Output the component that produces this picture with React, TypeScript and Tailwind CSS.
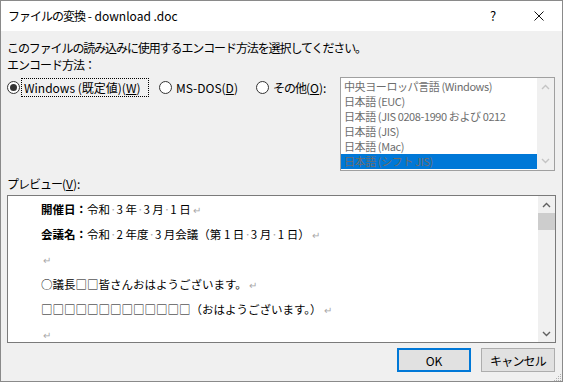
import React from 'react';

function Radio({ checked }: { checked?: boolean }) {
  return (
    <span className="flex h-[13px] w-[13px] shrink-0 items-center justify-center rounded-full border border-[#333] bg-white">
      {checked && <span className="h-[7px] w-[7px] rounded-full bg-[#333]" />}
    </span>
  );
}

function Chevron({ up, color }: { up?: boolean; color: string }) {
  return (
    <svg width="9" height="6" viewBox="0 0 9 6" className="block">
      <path d={up ? 'M1 5 L4.5 1.5 L8 5' : 'M1 1 L4.5 4.5 L8 1'} fill="none" stroke={color} strokeWidth="1.4" />
    </svg>
  );
}

// space marker as shown in the preview
const Sp = () => <span className="text-[#a8a8a8]">·</span>;
const Ret = () => <span className="ml-[2px] text-[10px] text-[#a8a8a8]">↵</span>;

const encodings = [
  '中央ヨーロッパ言語 (Windows)',
  '日本語 (EUC)',
  '日本語 (JIS 0208-1990 および 0212',
  '日本語 (JIS)',
  '日本語 (Mac)',
  '日本語 (シフト JIS)',
];

export default function App() {
  return (
    <div className="flex h-[382px] w-[563px] flex-col overflow-hidden border border-[#8a8a8a] bg-[#f0f0f0] font-['Noto_Sans_CJK_JP','Noto_Sans',sans-serif] text-[12px] text-black">
      {/* Title bar */}
      <div className="flex h-[30px] shrink-0 items-center bg-white">
        <span className="ml-[7px] flex-1 whitespace-pre">
          <span className="tracking-[-1px]">ファイルの変換</span> - download .doc
        </span>
        <span className="w-[46px] text-center text-[13px]">?</span>
        <span className="flex w-[46px] items-center justify-center">
          <svg width="10" height="10" viewBox="0 0 10 10">
            <path d="M0.5 0.5 L9.5 9.5 M9.5 0.5 L0.5 9.5" stroke="#111" strokeWidth="1" />
          </svg>
        </span>
      </div>

      {/* Body */}
      <div className="flex flex-1 flex-col px-[6px] leading-[17px]">
        <div className="mt-[8px] tracking-[-1.1px]">
          このファイルの読み込みに使用するエンコード方法を選択してください。
        </div>
        <div className="tracking-[-1px]">エンコード方法：</div>

        <div className="mt-[4px] flex items-start">
          <div className="mt-[1px] flex h-[19px] items-center">
            <Radio checked />
            <span className="ml-[1px] flex h-[19px] w-[128px] items-center border border-dotted border-black px-[2px]">
              Windows (既定値)(<u>W</u>)
            </span>
            <span className="ml-[10px]"><Radio /></span>
            <span className="ml-[4px] w-[77px]">MS-DOS(<u>D</u>)</span>
            <span className="ml-[3px]"><Radio /></span>
            <span className="ml-[4px]">
              <span className="tracking-[-1px]">その他</span>(<u>O</u>):
            </span>
          </div>

          <div className="ml-auto mr-[1px] flex h-[94px] w-[215px] border border-[#a0a0a0] bg-white">
            <div className="flex-1 overflow-hidden pt-[1px] text-[11px] leading-[15px] tracking-[-0.4px] text-[#6d6d6d]">
              {encodings.map((e, i) => (
                <div
                  key={e}
                  className={`whitespace-nowrap pl-[3px] ${i === encodings.length - 1 ? 'bg-[#0078d7]' : ''}`}
                >
                  {e}
                </div>
              ))}
            </div>
            <div className="flex w-[17px] flex-col items-center justify-between bg-[#f0f0f0] py-[6px]">
              <Chevron up color="#c4c4c4" />
              <Chevron color="#c4c4c4" />
            </div>
          </div>
        </div>

        <div className="mt-[4px]">
          <span className="tracking-[-1px]">プレビュー</span>(<u>V</u>):
        </div>

        {/* Preview */}
        <div className="mt-[3px] flex h-[148px] border border-[#7a7a7a] bg-white">
          <div className="flex-1 overflow-hidden whitespace-nowrap pl-[33px] pt-[1px] text-[11.5px] leading-[24px]">
            <div>
              <b>開催日：</b>令和<Sp />3 年<Sp />3 月<Sp />1 日<Ret />
            </div>
            <div>
              <b>会議名：</b>令和<Sp />2 年度<Sp />3 月会議（第 1 日<Sp />3 月<Sp />1 日）<Ret />
            </div>
            <div>
              <Ret />
            </div>
            <div>
              ○議長□□皆さんおはようございます。<Ret />
            </div>
            <div>
              □□□□□□□□□□□□□（おはようございます。）<Ret />
            </div>
            <div>
              <Ret />
            </div>
          </div>
          <div className="flex w-[17px] flex-col items-center bg-[#f0f0f0]">
            <div className="flex h-[17px] items-center">
              <Chevron up color="#606060" />
            </div>
            <div className="h-[17px] w-full bg-[#cdcdcd]" />
            <div className="flex-1" />
            <div className="flex h-[17px] items-center">
              <Chevron color="#606060" />
            </div>
          </div>
        </div>

        {/* Buttons */}
        <div className="mt-[5px] flex justify-end gap-[10px] pr-[1px]">
          <button className="h-[24px] w-[74px] border-2 border-[#0078d7] bg-[#e1e1e1]">OK</button>
          <button className="h-[24px] w-[74px] border border-[#adadad] bg-[#e1e1e1] tracking-[-0.8px]">キャンセル</button>
        </div>

        <div className="-mr-[6px] flex flex-1 items-end justify-end">
          <svg width="10" height="10" viewBox="0 0 10 10" className="block">
            <g fill="#b0b0b0">
              <rect x="8" y="2" width="1" height="1" />
              <rect x="6" y="4" width="1" height="1" />
              <rect x="8" y="4" width="1" height="1" />
              <rect x="4" y="6" width="1" height="1" />
              <rect x="6" y="6" width="1" height="1" />
              <rect x="8" y="6" width="1" height="1" />
              <rect x="2" y="8" width="1" height="1" />
              <rect x="4" y="8" width="1" height="1" />
              <rect x="6" y="8" width="1" height="1" />
              <rect x="8" y="8" width="1" height="1" />
            </g>
          </svg>
        </div>
      </div>
    </div>
  );
}
